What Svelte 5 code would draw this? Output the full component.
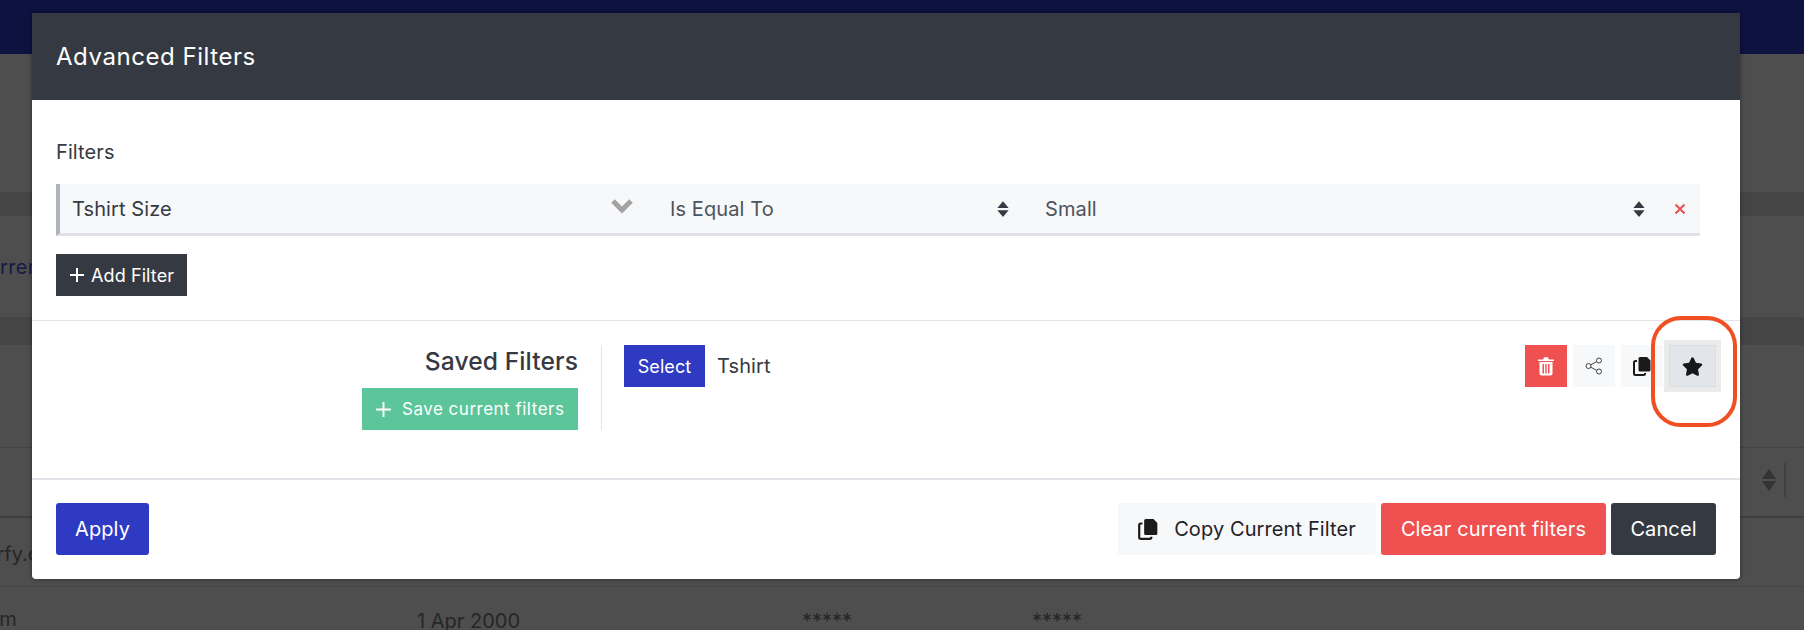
<script>
  const filterFields = [
    { label: 'Is Equal To', cls: 'op' },
    { label: 'Small', cls: 'val' }
  ];
</script>

<div class="page">
  <div class="nav"></div>
  <div class="gap g1"></div>
  <div class="band b1"></div>
  <div class="crumb"><span class="link">Current</span></div>
  <div class="band b2"></div>
  <div class="gap g2"></div>
  <div class="thead">
    <span class="sorter">
      <svg width="14" height="24" viewBox="0 0 14 24" aria-hidden="true"><path d="M7 1 14 11H0zM7 23 0 13h14z" fill="#333"/></svg>
      <i></i>
    </span>
  </div>
  <div class="trow r1"><span class="email">nerfy.com</span></div>
  <div class="trow r2">
    <span class="email">nerfy.com</span>
    <span class="date">1 Apr 2000</span>
    <span class="mask m1">*****</span>
    <span class="mask m2">*****</span>
  </div>

  <div class="modal">
    <header class="mhead"><h2>Advanced Filters</h2></header>

    <section class="filters">
      <div class="label">Filters</div>
      <div class="row">
        <div class="field">
          <span>Tshirt Size</span>
          <svg class="chev" width="24" height="16" viewBox="0 0 24 16" aria-hidden="true"><path d="M3 3l9 9 9-9" fill="none" stroke="#a3a3a3" stroke-width="5"/></svg>
        </div>
        {#each filterFields as f}
          <div class="sel {f.cls}">
            <span>{f.label}</span>
            <svg width="14" height="18" viewBox="0 0 12 16" aria-hidden="true"><path d="M6 1l5 6H1zM6 15 1 9h10z" fill="#353a42"/></svg>
          </div>
        {/each}
        <svg class="x" width="12" height="12" viewBox="0 0 12 12" aria-hidden="true"><path d="M1.500 1.500l9 9m0-9l-9 9" stroke="#ef5050" stroke-width="2" fill="none"/></svg>
      </div>
      <button class="btn dark add">
        <svg width="16" height="16" viewBox="0 0 16 16" aria-hidden="true"><path d="M8 1v14M1 8h14" stroke="#fff" stroke-width="2"/></svg>
        Add Filter
      </button>
    </section>

    <section class="saved">
      <div class="savedleft">
        <h3>Saved Filters</h3>
        <button class="btn green">
          <svg width="17" height="17" viewBox="0 0 16 16" aria-hidden="true"><path d="M8 1v14M1 8h14" stroke="#fff" stroke-width="1.800"/></svg>
          Save current filters
        </button>
      </div>
      <div class="savedright">
        <button class="btn blue sel-btn">Select</button>
        <span class="name">Tshirt</span>
        <div class="tools">
          <button class="tool trash" aria-label="Delete">
            <svg width="18" height="20" viewBox="0 0 18 20" aria-hidden="true"><path d="M1 3.500h16V5H1zM6.200 3.500 7 1.200h4l.8 2.300z" fill="#fff"/><path fill-rule="evenodd" d="M2.500 6h13v11.500A2 2 0 0 1 13.500 19.500h-9a2 2 0 0 1-2-2zM5.500 8v9.500H7V8zM8.300 8v9.500h1.400V8zM11 8v9.500h1.500V8z" fill="#fff"/></svg>
          </button>
          <button class="tool light" aria-label="Share">
            <svg width="18" height="18" viewBox="0 0 18 18" aria-hidden="true"><g fill="none" stroke="#444" stroke-width="1"><circle cx="3.500" cy="9" r="2.500"/><circle cx="14" cy="3.500" r="2.500"/><circle cx="14" cy="14.500" r="2.500"/><path d="M5.700 7.800l6.100-3.200M5.700 10.200l6.100 3.200"/></g></svg>
          </button>
          <button class="tool light" aria-label="Copy">
            <svg width="18" height="20" viewBox="0 0 18 20" aria-hidden="true"><path d="M4 5H2.500A1.500 1.500 0 0 0 1 6.500v11A1.500 1.500 0 0 0 2.500 19h8a1.500 1.500 0 0 0 1.500-1.500V17" fill="none" stroke="#1a1a1a" stroke-width="2"/><path d="M7 1h7l3.500 3.500V14a1.500 1.500 0 0 1-1.500 1.500H7A1.500 1.500 0 0 1 5.500 14V2.500A1.500 1.500 0 0 1 7 1z" fill="#1a1a1a"/></svg>
          </button>
          <button class="tool star" aria-label="Favourite">
            <svg width="21" height="19" viewBox="0 0 576 512" aria-hidden="true"><path d="M259.300 17.800L194 150.200 47.900 171.500c-26.200 3.800-36.700 36.100-17.700 54.600l105.700 103-25 145.500c-4.500 26.300 23.200 46 46.400 33.700L288 439.600l130.700 68.700c23.200 12.200 50.900-7.400 46.400-33.700l-25-145.500 105.700-103c19-18.500 8.500-50.800-17.700-54.600L382 150.200 316.700 17.800c-11.700-23.600-45.600-23.900-57.400 0z" fill="#16181b"/></svg>
          </button>
        </div>
      </div>
    </section>

    <footer class="mfoot">
      <button class="fbtn blue">Apply</button>
      <div class="fright">
        <button class="fbtn copy">
          <svg width="20" height="22" viewBox="0 0 18 20" aria-hidden="true"><path d="M4 5H2.500A1.500 1.500 0 0 0 1 6.500v11A1.500 1.500 0 0 0 2.500 19h8a1.500 1.500 0 0 0 1.500-1.500V17" fill="none" stroke="#1a1a1a" stroke-width="2"/><path d="M7 1h7l3.500 3.500V14a1.500 1.500 0 0 1-1.500 1.500H7A1.500 1.500 0 0 1 5.500 14V2.500A1.500 1.500 0 0 1 7 1z" fill="#1a1a1a"/></svg>
          Copy Current Filter
        </button>
        <button class="fbtn red">Clear current filters</button>
        <button class="fbtn cancel">Cancel</button>
      </div>
    </footer>
    <div class="callout"></div>
  </div>
</div>

<style>
  :global(body) {
    margin: 0;
    background: #4e4e4e;
    font-family: Inter, "Liberation Sans", sans-serif;
  }
  .page {
    position: relative;
    height: 630px;
    overflow: hidden;
    background: #4e4e4e;
    color: #262626;
    font-size: 20px;
  }
  .nav { height: 54px; background: #0d1240; }
  .g1 { height: 138px; }
  .band { background: #454545; }
  .b1 { height: 24px; }
  .crumb { height: 101px; display: flex; align-items: center; }
  .link { margin-left: -27px; color: #171a45; font-size: 20px; letter-spacing: .3px; }
  .b2 { height: 28px; }
  .g2 { height: 102px; }
  .thead {
    height: 68px;
    border-top: 1px solid #434343;
    border-bottom: 2px solid #3f3f3f;
    display: flex;
    justify-content: flex-end;
    align-items: center;
  }
  .sorter { display: flex; align-items: center; gap: 8px; margin-right: 18px; margin-top: -4px; }
  .sorter i { display: block; width: 2px; height: 34px; background: #3f3f3f; }
  .trow { position: relative; border-bottom: 1px solid #444; }
  .r1 { height: 68px; }
  .r2 { height: 60px; border: 0; }
  .email { display: block; margin-left: -27px; white-space: nowrap; }
  .r1 .email { padding-top: 24px; }
  .r2 .email { padding-top: 20px; margin-left: -79px; }
  .date { position: absolute; left: 417px; top: 22px; }
  .mask { position: absolute; top: 22px; font-size: 20px; }
  .m1 { left: 802px; }
  .m2 { left: 1032px; }

  .modal {
    position: absolute;
    left: 32px;
    top: 13px;
    width: 1708px;
    height: 566px;
    display: flex;
    flex-direction: column;
    background: #fff;
    border-radius: 0 0 4px 4px;
    box-shadow: 0 0 5px rgba(0, 0, 0, .45);
    color: #353a42;
    letter-spacing: .1px;
  }
  .mhead {
    height: 87px;
    flex: none;
    box-sizing: border-box;
    padding: 0 24px;
    display: flex;
    align-items: center;
    background: #353a42;
  }
  h2 { margin: 0; font-size: 24px; font-weight: 400; letter-spacing: .55px; color: #fff; }
  .filters {
    height: 221px;
    flex: none;
    box-sizing: border-box;
    padding: 0 24px;
    border-bottom: 1px solid #e2e4e9;
  }
  .label { height: 84px; line-height: 104px; font-size: 20px; }
  .row {
    width: 1644px;
    height: 52px;
    box-sizing: border-box;
    display: flex;
    align-items: center;
    background: #f7f8fa;
    border-left: 4px solid #aeb3bc;
    border-bottom: 3px solid #dfe1e6;
  }
  .field { width: 596px; flex: none; box-sizing: border-box; padding: 0 22px 0 12px; display: flex; justify-content: space-between; align-items: center; }
  .chev { margin-top: -6px; }
  .sel { display: flex; align-items: center; justify-content: space-between; flex: none; box-sizing: border-box; padding-top: 1px; color: #4e535b; }
  .op { width: 354px; padding-left: 14px; }
  .val { width: 601px; margin-left: 35px; }
  .x { margin-left: 28px; }
  button { font-family: inherit; letter-spacing: inherit; border: 0; cursor: pointer; }
  .btn {
    height: 42px;
    display: inline-flex;
    align-items: center;
    padding: 0;
    border-radius: 0;
    color: #fff;
    font-size: 18px;
  }
  .dark { background: #353a42; }
  .add { width: 131px; margin-top: 18px; padding-left: 13px; gap: 6px; }
  .saved { height: 159px; flex: none; display: flex; padding: 24px 24px 0 0; box-sizing: border-box; border-bottom: 2px solid #e2e4e9; align-items: flex-start; }
  .savedleft {
    width: 546px;
    flex: none;
    height: 85px;
    padding-right: 23px;
    border-right: 1px solid #e2e4e9;
    display: flex;
    flex-direction: column;
    align-items: flex-end;
    justify-content: space-between;
  }
  h3 { margin: 0; font-size: 24.600px; font-weight: 500; line-height: 33px; color: #353a42; }
  .green { width: 216px; background: #5cc599; padding-left: 13px; gap: 10px; font-size: 17px; letter-spacing: .5px; }
  .blue { background: #2e3ac2; color: #fff; }
  .savedright { flex: 1; margin-left: 22px; display: flex; align-items: center; }
  .sel-btn { width: 81px; justify-content: center; }
  .name { margin-left: 12px; }
  .tools { margin-left: auto; display: flex; gap: 6px; }
  .tool { width: 42px; height: 42px; display: flex; align-items: center; justify-content: center; padding: 0; }
  .trash { background: #ef5050; }
  .light { background: #f7f8fa; }
  .star {
    width: 47px;
    background: #e2e5ea;
    border: 1px solid #d8dde2;
    box-sizing: border-box;
    box-shadow: 0 0 0 5px #ebebeb;
  }
  .mfoot { height: 99px; flex: none; box-sizing: border-box; padding: 23px 24px 0; display: flex; justify-content: space-between; align-items: flex-start; }
  .fright { display: flex; gap: 5px; }
  .fbtn { height: 52px; border-radius: 3px; font-size: 20px; padding: 0; color: #fff; display: inline-flex; align-items: center; justify-content: center; }
  .mfoot > .fbtn { width: 93px; }
  .copy { width: 258px; background: #f7f8fa; color: #1f2226; gap: 16px; }
  .red { width: 225px; background: #ef5050; }
  .cancel { width: 105px; background: #353a42; }
  .callout {
    position: absolute;
    left: 1619px;
    top: 303px;
    width: 86px;
    height: 111px;
    box-sizing: border-box;
    border: 4px solid #f04e23;
    border-radius: 30px;
    pointer-events: none;
  }
</style>
